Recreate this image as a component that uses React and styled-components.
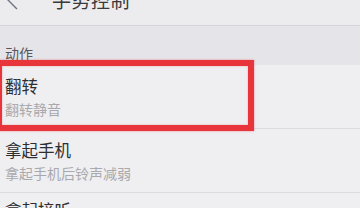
import React from 'react';
import styled, { createGlobalStyle } from 'styled-components';

const GlobalStyle = createGlobalStyle`
  html, body {
    margin: 0;
    padding: 0;
    background: #eeeef0;
    overflow: hidden;
  }
  body {
    font-family: "Noto Sans CJK SC", "Noto Sans", sans-serif;
  }
`;

const Screen = styled.div`
  position: relative;
  width: 360px;
  height: 208px;
  overflow: hidden;
  background: #eeeef0;
`;

const Header = styled.header`
  margin-top: -25px;
  height: 50px;
  display: flex;
  align-items: center;
  padding-left: 52px;
  position: relative;
  background: #ececee;
  border-bottom: 1px solid #d6d6da;
`;

const BackButton = styled.span`
  position: absolute;
  left: 6px;
  top: 15px;
  width: 14px;
  height: 20px;
  display: flex;
`;

const HeaderTitle = styled.h1`
  margin: 0;
  font-size: 19px;
  font-weight: 400;
  line-height: 24px;
  color: #3a3a3c;
  letter-spacing: 0.5px;
`;

const SectionLabel = styled.div`
  height: 39px;
  box-sizing: border-box;
  display: flex;
  align-items: flex-end;
  padding: 0 5px 4px;
  font-size: 14px;
  line-height: 16px;
  color: #58585c;
  background: #e5e5e9;
`;

const Item = styled.div`
  height: 64px;
  box-sizing: border-box;
  padding: ${p => (p.$tight ? '7px' : '11px')} 5px 0;
  display: flex;
  flex-direction: column;
  gap: 5px;
  border-bottom: 1px solid #dcdce0;
  background: #efeff1;
`;

const ItemTitle = styled.div`
  font-size: 16.5px;
  line-height: 20px;
  color: #2e2e30;
`;

const ItemSub = styled.div`
  font-size: 14px;
  line-height: 17px;
  color: #a9a9ad;
`;

const Highlight = styled.div`
  position: absolute;
  left: -4px;
  top: 60px;
  width: 258px;
  height: 71px;
  box-sizing: border-box;
  border: 6px solid #e8343b;
  box-shadow: 0 0 2px rgba(232, 52, 59, 0.5), inset 0 0 2px rgba(232, 52, 59, 0.4);
  pointer-events: none;
`;

const items = [
  { title: '翻转', sub: '翻转静音' },
  { title: '拿起手机', sub: '拿起手机后铃声减弱' },
  { title: '拿起接听', sub: '拿起手机自动接听来电', tight: true },
];

export default function App() {
  return (
    <Screen>
      <GlobalStyle />
      <Header>
        <BackButton>
          <svg width="14" height="20" viewBox="0 0 14 20">
            <path d="M11 1 L2 10 L11 19" fill="none" stroke="#6f7280" strokeWidth="1.4" />
          </svg>
        </BackButton>
        <HeaderTitle>手势控制</HeaderTitle>
      </Header>
      <SectionLabel>动作</SectionLabel>
      {items.map(it => (
        <Item key={it.title} $tight={it.tight}>
          <ItemTitle>{it.title}</ItemTitle>
          <ItemSub>{it.sub}</ItemSub>
        </Item>
      ))}
      <Highlight />
    </Screen>
  );
}
